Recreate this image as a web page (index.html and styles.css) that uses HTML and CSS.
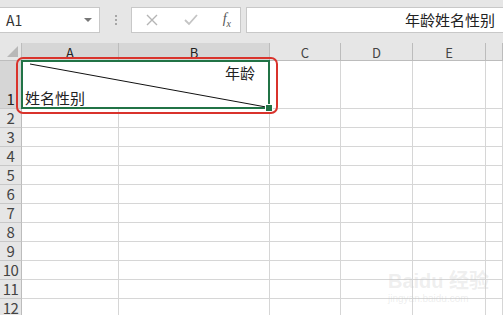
FILE: index.html
```html
<!DOCTYPE html>
<html lang="zh-CN">
<head>
    <meta charset="UTF-8">
    <title>Excel 斜线表头</title>
    <link rel="stylesheet" href="styles.css">
</head>
<body>
    <div class="toolbar">
        <div class="name-box">
            <span>A1</span>
            <span class="drop-arrow"></span>
        </div>
        <div class="grip">
            <span></span><span></span><span></span>
        </div>
        <div class="fx-buttons">
            <svg width="14" height="14" viewBox="0 0 14 14"><path d="M2 2 L12 12 M12 2 L2 12" stroke="#b5b5b5" stroke-width="1.4" fill="none"/></svg>
            <svg width="16" height="14" viewBox="0 0 16 14"><path d="M2 7 L6 11 L14 2" stroke="#c4c4c4" stroke-width="1.8" fill="none"/></svg>
            <span class="fx"><i>f</i><sub>x</sub></span>
        </div>
        <div class="formula-input">年龄姓名性别</div>
    </div>

    <div class="sheet">
        <div class="corner"><span class="tri"></span></div>
        <div class="col-head active">A</div>
        <div class="col-head active">B</div>
        <div class="col-head">C</div>
        <div class="col-head">D</div>
        <div class="col-head">E</div>
        <div class="col-head"></div>

        <div class="row-head tall active">1</div>
        <div class="cell merged">
            <svg class="diag" width="248" height="48" viewBox="0 0 248 48"><line x1="8" y1="3" x2="244" y2="46" stroke="#111" stroke-width="1"/></svg>
            <span class="top-label">年龄</span>
            <span class="bottom-label">姓名性别</span>
            <div class="selection"><span class="handle"></span></div>
            <div class="mark"></div>
        </div>
        <div class="cell"></div>
        <div class="cell"></div>
        <div class="cell"></div>
        <div class="cell"></div>

        <div class="row-head">2</div><div class="cell"></div><div class="cell"></div><div class="cell"></div><div class="cell"></div><div class="cell"></div><div class="cell"></div>
        <div class="row-head">3</div><div class="cell"></div><div class="cell"></div><div class="cell"></div><div class="cell"></div><div class="cell"></div><div class="cell"></div>
        <div class="row-head">4</div><div class="cell"></div><div class="cell"></div><div class="cell"></div><div class="cell"></div><div class="cell"></div><div class="cell"></div>
        <div class="row-head">5</div><div class="cell"></div><div class="cell"></div><div class="cell"></div><div class="cell"></div><div class="cell"></div><div class="cell"></div>
        <div class="row-head">6</div><div class="cell"></div><div class="cell"></div><div class="cell"></div><div class="cell"></div><div class="cell"></div><div class="cell"></div>
        <div class="row-head">7</div><div class="cell"></div><div class="cell"></div><div class="cell"></div><div class="cell"></div><div class="cell"></div><div class="cell"></div>
        <div class="row-head">8</div><div class="cell"></div><div class="cell"></div><div class="cell"></div><div class="cell"></div><div class="cell"></div><div class="cell"></div>
        <div class="row-head">9</div><div class="cell"></div><div class="cell"></div><div class="cell"></div><div class="cell"></div><div class="cell"></div><div class="cell"></div>
        <div class="row-head">10</div><div class="cell"></div><div class="cell"></div><div class="cell"></div><div class="cell"></div><div class="cell"></div><div class="cell"></div>
        <div class="row-head">11</div><div class="cell"></div><div class="cell"></div><div class="cell"></div><div class="cell"></div><div class="cell"></div><div class="cell"></div>
        <div class="row-head">12</div><div class="cell"></div><div class="cell"></div><div class="cell"></div><div class="cell"></div><div class="cell"></div><div class="cell"></div>

        <div class="watermark">Baidu 经验<small>jingyan.baidu.com</small></div>
    </div>
</body>
</html>
```

FILE: styles.css
```css
body {
    margin: 0;
    width: 503px;
    height: 315px;
    overflow: hidden;
    background-color: #fff;
    font-family: "Noto Sans CJK SC", "Noto Sans", sans-serif;
    color: #222;
}
.toolbar {
    height: 43px;
    box-sizing: border-box;
    padding-top: 7px;
    background-color: #e6e6e6;
    display: flex;
    align-items: flex-start;
}
.name-box {
    width: 100px;
    height: 26px;
    box-sizing: border-box;
    background-color: #fff;
    border: 1px solid #c8c8c8;
    border-left: none;
    display: flex;
    align-items: center;
    justify-content: space-between;
    padding: 0 7px 0 6px;
    font-size: 14px;
    color: #333;
}
.drop-arrow {
    width: 0;
    height: 0;
    border-left: 4px solid transparent;
    border-right: 4px solid transparent;
    border-top: 4px solid #777;
}
.grip {
    width: 31px;
    height: 26px;
    display: flex;
    flex-direction: column;
    align-items: center;
    justify-content: center;
    gap: 2px;
}
.grip span {
    width: 2px;
    height: 2px;
    background-color: #a6a6a6;
}
.fx-buttons {
    width: 110px;
    height: 26px;
    box-sizing: border-box;
    background-color: #fff;
    border: 1px solid #c8c8c8;
    display: flex;
    align-items: center;
    justify-content: space-between;
    padding: 0 9px 0 13px;
}
.fx {
    font-family: "Liberation Serif", serif;
    font-size: 14px;
    color: #555;
}
.fx sub {
    font-size: 10px;
    font-style: italic;
}
.formula-input {
    flex: 1;
    margin-left: 5px;
    height: 26px;
    box-sizing: border-box;
    background-color: #fff;
    border: 1px solid #c8c8c8;
    border-right: none;
    text-align: right;
    padding-right: 8px;
    font-size: 15px;
    line-height: 24px;
    color: #222;
}
.sheet {
    position: relative;
    display: grid;
    grid-template-columns: 22px 97px 151px 71px 72px 73px 1fr;
    grid-template-rows: 18px 48px repeat(11, 19px);
}
.corner,
.col-head,
.row-head,
.cell {
    box-sizing: border-box;
    border-right: 1px solid #d6d6d6;
    border-bottom: 1px solid #d6d6d6;
}
.corner {
    position: relative;
    background-color: #e6e6e6;
    border-color: #bdbdbd;
}
.tri {
    position: absolute;
    right: 3px;
    bottom: 3px;
    width: 0;
    height: 0;
    border-left: 11px solid transparent;
    border-bottom: 11px solid #b8b8b8;
}
.col-head {
    background-color: #e6e6e6;
    border-right-color: #bcbcbc;
    border-bottom-color: #bcbcbc;
    text-align: center;
    font-size: 13px;
    line-height: 20px;
    color: #444;
}
.col-head.active {
    background-color: #d6d6d6;
    color: #222;
}
.row-head {
    background-color: #e6e6e6;
    border-right-color: #bcbcbc;
    border-bottom-color: #c8c8c8;
    text-align: center;
    font-size: 15px;
    line-height: 18px;
    color: #444;
    letter-spacing: -0.5px;
}
.row-head.tall {
    display: flex;
    align-items: flex-end;
    justify-content: center;
}
.row-head.active {
    background-color: #d6d6d6;
    color: #222;
}
.merged {
    grid-column: span 2;
    position: relative;
    font-size: 15px;
    color: #222;
}
.diag {
    position: absolute;
    left: 0;
    top: 0;
}
.top-label {
    position: absolute;
    right: 14px;
    top: 1px;
}
.bottom-label {
    position: absolute;
    left: 3px;
    bottom: 0;
}
.selection {
    position: absolute;
    left: -1px;
    top: -1px;
    right: -1px;
    bottom: -1px;
    border: 2px solid #217346;
}
.handle {
    position: absolute;
    right: -5px;
    bottom: -5px;
    width: 6px;
    height: 6px;
    background-color: #217346;
    border: 1px solid #fff;
}
.mark {
    position: absolute;
    left: -6px;
    top: -4px;
    right: -9px;
    bottom: -6px;
    border: 2px solid #d9332c;
    border-radius: 7px;
}
.watermark {
    position: absolute;
    left: 388px;
    top: 228px;
    white-space: nowrap;
    font-family: "Liberation Sans", "Noto Sans CJK SC", sans-serif;
    font-size: 20px;
    font-weight: bold;
    color: rgba(200, 200, 200, 0.3);
    line-height: 1;
}
.watermark small {
    display: block;
    font-size: 10px;
    font-weight: normal;
    margin-top: 3px;
}
```
